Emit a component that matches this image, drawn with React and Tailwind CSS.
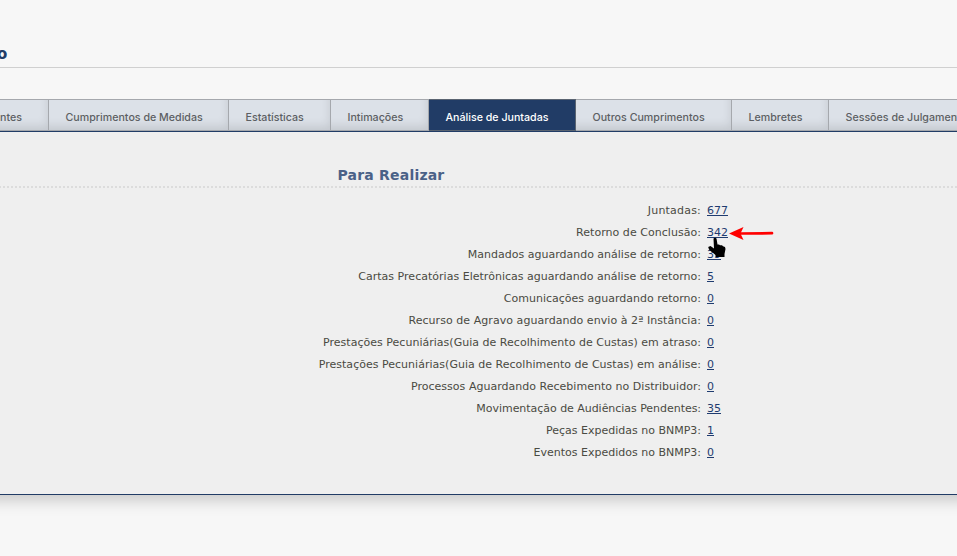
const tabs = [
  ['ntes', 'w-[49px]'],
  ['Cumprimentos de Medidas', 'w-[180px]'],
  ['Estatísticas', 'w-[102px]'],
  ['Intimações', 'w-[98px]'],
  ['Análise de Juntadas', 'w-[147px]'],
  ['Outros Cumprimentos', 'w-[156px]'],
  ['Lembretes', 'w-[97px]'],
  ['Sessões de Julgamento', 'w-[170px]'],
];

const rows = [
  ['Juntadas:', '677', 'tracking-[0.2px]'],
  ['Retorno de Conclusão:', '342', 'tracking-[0.04px]'],
  ['Mandados aguardando análise de retorno:', '39', ''],
  ['Cartas Precatórias Eletrônicas aguardando análise de retorno:', '5', 'tracking-[0.02px]'],
  ['Comunicações aguardando retorno:', '0', ''],
  ['Recurso de Agravo aguardando envio à 2ª Instância:', '0', 'tracking-[0.055px]'],
  ['Prestações Pecuniárias(Guia de Recolhimento de Custas) em atraso:', '0', 'tracking-[0.02px]'],
  ['Prestações Pecuniárias(Guia de Recolhimento de Custas) em análise:', '0', 'tracking-[0.02px]'],
  ['Processos Aguardando Recebimento no Distribuidor:', '0', 'tracking-[0.02px]'],
  ['Movimentação de Audiências Pendentes:', '35', 'tracking-[-0.04px]'],
  ['Peças Expedidas no BNMP3:', '1', ''],
  ['Eventos Expedidos no BNMP3:', '0', ''],
];

function Tab({ label, width }) {
  const active = label === 'Análise de Juntadas';
  const first = label === 'ntes';
  const look = active
    ? 'bg-[#213c66] text-white border-[#5a6471]'
    : 'bg-[#dce1e8] text-[#5c5f63] border-[#a5a8ad] shadow-[inset_-4px_-8px_10px_-4px_rgba(0,0,0,0.11)]';
  return (
    <div
      className={`${width} ${look} ${first ? '' : 'pl-[16.5px]'} h-8 shrink-0 border-t border-r border-b pt-[10px] text-[10.667px] leading-4 font-medium whitespace-nowrap`}
    >
      {label}
    </div>
  );
}

function Pointer() {
  return (
    <svg className="absolute top-[3px] left-0" width="24" height="24" viewBox="0 0 24 24">
      <path
        d="M6.500 2.500Q8 .8 9.500 2.500L10.500 8.500H12L13 9.300H15L16 10.200L18 11L18.500 13L17.500 18V21H8.500V19L2 13.500L1.200 11L3.500 10L7 12.500Z"
        fill="#000"
      />
    </svg>
  );
}

function Arrow() {
  return (
    <svg className="absolute top-[-8px] left-[22px]" width="46" height="16" viewBox="0 0 46 16">
      <path d="M11 8.500L43 8.200" stroke="#f00" strokeWidth="2.700" strokeLinecap="round" />
      <path d="M0 8.500L14.500 2L11.500 8.500L14.500 15Z" fill="#f00" />
    </svg>
  );
}

export default function App() {
  return (
    <div className="h-[556px] w-[957px] overflow-hidden bg-[#f7f7f7] font-['DejaVu_Sans',sans-serif]">
      <header className="h-[68px] border-b border-[#d0d0d0] pt-[44px]">
        <h1 className="-ml-[3px] text-[15px] leading-5 font-bold text-[#213c66]">o</h1>
      </header>
      <nav className="mt-[31px] flex h-8 font-['Inter',sans-serif]">
        {tabs.map(([label, width]) => (
          <Tab key={label} label={label} width={width} />
        ))}
      </nav>
      <main className="-mx-5 h-[364px] border-t border-b border-[#213c66] bg-[#efefef] px-5 shadow-[0_5px_15px_rgba(0,0,0,0.2)]">
        <h2 className="-mx-5 h-[56px] border-b-2 border-dotted border-[#dcdcdc] pt-[33px] pl-[357.5px] text-[14px] leading-5 font-bold tracking-[0.2px] text-[#4a6187]">
          Para Realizar
        </h2>
        <div className="pt-3 text-[11px] leading-[22px]">
          {rows.map(([label, value, tracking]) => (
            <div key={label} className="flex h-[22px]">
              <span className={`w-[701px] text-right whitespace-nowrap text-[#4a4a42] ${tracking}`}>{label}</span>
              <span className="relative ml-1.5">
                <a className="text-[#1f3c70] underline">{value}</a>
                {value === '342' && (
                  <span className="absolute top-[11px] left-0 z-10">
                    <Pointer />
                    <Arrow />
                  </span>
                )}
              </span>
            </div>
          ))}
        </div>
      </main>
    </div>
  );
}
